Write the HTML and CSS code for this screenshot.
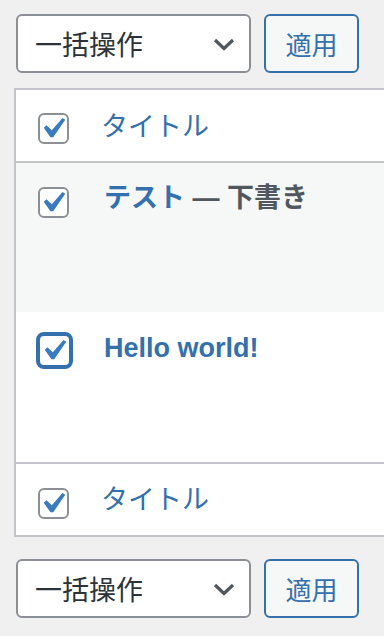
FILE: index.html
```html
<!DOCTYPE html>
<html lang="ja">
<head>
    <meta charset="UTF-8">
    <meta name="viewport" content="width=device-width, initial-scale=1.0">
    <title>投稿一覧</title>
    <link rel="stylesheet" href="styles.css">
</head>
<body>
    <div class="tablenav">
        <div class="select-wrap">
            <select class="bulk-select">
                <option>一括操作</option>
            </select>
            <svg class="chevron" width="22" height="13" viewBox="0 0 22 13"><polyline points="2,2 11,10.5 20,2" fill="none" stroke="#50575e" stroke-width="3.2"/></svg>
        </div>
        <button class="apply-btn">適用</button>
    </div>

    <div class="list-table">
        <div class="row row-head">
            <span class="check"><svg viewBox="4 3.5 13 13"><path d="M14.83 4.89l1.34.94-5.81 8.38H9.02L5.78 9.67l1.34-1.25 2.57 2.4z"/></svg></span>
            <a class="col-title">タイトル</a>
        </div>
        <div class="row row-post alt">
            <span class="check"><svg viewBox="4 3.5 13 13"><path d="M14.83 4.89l1.34.94-5.81 8.38H9.02L5.78 9.67l1.34-1.25 2.57 2.4z"/></svg></span>
            <div class="post-title"><a>テスト</a> <span class="state">— 下書き</span></div>
        </div>
        <div class="row row-post">
            <span class="check focused"><svg viewBox="4 3.5 13 13"><path d="M14.83 4.89l1.34.94-5.81 8.38H9.02L5.78 9.67l1.34-1.25 2.57 2.4z"/></svg></span>
            <div class="post-title"><a>Hello world!</a></div>
        </div>
        <div class="row row-foot">
            <span class="check"><svg viewBox="4 3.5 13 13"><path d="M14.83 4.89l1.34.94-5.81 8.38H9.02L5.78 9.67l1.34-1.25 2.57 2.4z"/></svg></span>
            <a class="col-title">タイトル</a>
        </div>
    </div>

    <div class="tablenav bottom">
        <div class="select-wrap">
            <select class="bulk-select">
                <option>一括操作</option>
            </select>
            <svg class="chevron" width="22" height="13" viewBox="0 0 22 13"><polyline points="2,2 11,10.5 20,2" fill="none" stroke="#50575e" stroke-width="3.2"/></svg>
        </div>
        <button class="apply-btn">適用</button>
    </div>
</body>
</html>
```

FILE: styles.css
```css
:root {
    --bg: #f0f0f1;
    --border: #c3c4c7;
    --link: #3370ac;
    --check: #3a7bc0;
    --text: #2c3338;
    --muted: #50575e;
}

* {
    box-sizing: border-box;
}

body {
    margin: 0;
    background: var(--bg);
    font-family: "Liberation Sans", "Noto Sans CJK JP", sans-serif;
    overflow: hidden;
}

.tablenav {
    display: flex;
    gap: 13px;
    padding: 14px 0 0 16px;
}

.tablenav.bottom {
    padding-top: 22px;
}

.select-wrap {
    position: relative;
    width: 235px;
}

.bulk-select {
    appearance: none;
    -webkit-appearance: none;
    width: 100%;
    height: 59px;
    margin: 0;
    padding: 0 0 0 17px;
    border: 2px solid #8c8f94;
    border-radius: 6px;
    background: #fff;
    color: var(--text);
    font-family: "Noto Sans CJK JP", sans-serif;
    font-size: 27px;
}

.chevron {
    position: absolute;
    right: 16px;
    top: 24px;
    pointer-events: none;
}

.apply-btn {
    width: 95px;
    height: 59px;
    margin: 0;
    padding: 0;
    border: 2px solid var(--link);
    border-radius: 6px;
    background: #f6f7f7;
    color: var(--link);
    font-family: "Noto Sans CJK JP", sans-serif;
    font-size: 26px;
}

.list-table {
    margin: 15px 0 0 14px;
    border: 2px solid var(--border);
    border-right: none;
    background: #fff;
}

.row {
    display: flex;
    align-items: flex-start;
    padding-left: 22px;
}

.row-head {
    height: 73px;
    padding-top: 23px;
    border-bottom: 2px solid var(--border);
}

.row-foot {
    height: 73px;
    padding-top: 24px;
    border-top: 2px solid var(--border);
}

.row-post {
    height: 149px;
    padding-top: 24px;
}

.row-post.alt {
    background: #f6f7f7;
}

.row-post + .row-post {
    height: 150px;
    padding-top: 22px;
}

.check {
    flex: none;
    display: flex;
    align-items: center;
    justify-content: center;
    width: 31px;
    height: 31px;
    border: 2px solid #8c8f94;
    border-radius: 6px;
    background: #fff;
}

.check svg {
    width: 27px;
    height: 27px;
    fill: var(--check);
}

.check.focused {
    width: 37px;
    height: 37px;
    margin: -2px -4px 0 -2px;
    border: 4px solid var(--link);
    border-radius: 8px;
}

.col-title {
    margin: -5px 0 0 32px;
    color: var(--link);
    font-size: 27px;
    line-height: 38px;
}

.row-foot .col-title {
    margin-top: -7px;
}

.post-title {
    margin: -8px 0 0 35px;
    font-size: 27px;
    font-weight: bold;
    line-height: 38px;
}

.row-post + .row-post .post-title {
    margin-top: -5px;
    margin-left: 35px;
}

.post-title a {
    color: var(--link);
}

.post-title .state {
    color: var(--muted);
}
```
